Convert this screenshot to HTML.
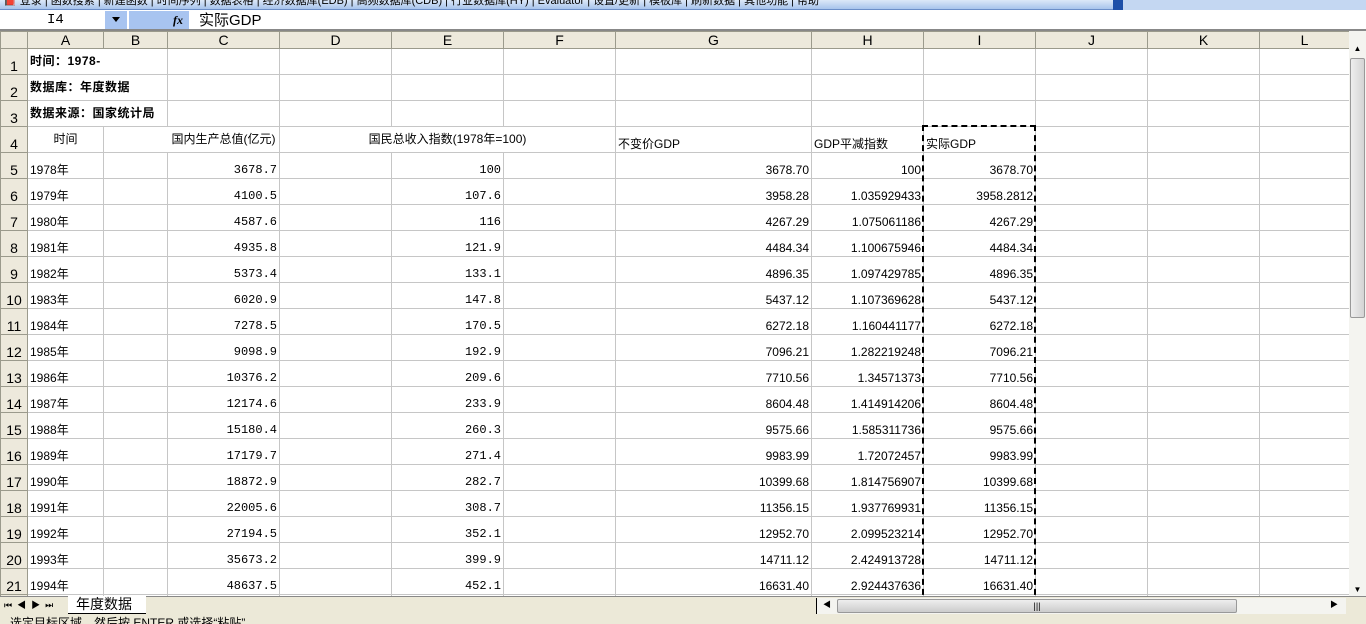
<!DOCTYPE html>
<html><head><meta charset="utf-8"><style>
*{margin:0;padding:0;box-sizing:border-box}
body{width:1366px;height:624px;overflow:hidden;background:#fff;font-family:"Liberation Sans","Noto Sans CJK SC",sans-serif;font-size:12px;position:relative}
#tb{position:absolute;left:0;top:0;width:1366px;height:10px;background:#c4d7f2}
#tb .in{position:absolute;left:0;top:0;width:1118px;height:10px;background:linear-gradient(#dce8f8,#a8c4ec);border-bottom:1px solid #6b8ec8;font-size:11px;line-height:2px;white-space:nowrap;overflow:hidden;color:#000}
#fb{position:absolute;left:0;top:10px;width:1366px;height:21px;background:#fff;border-bottom:2px solid #888}
#nb{position:absolute;left:2px;top:1px;width:125px;height:18px;background:#fff;font-family:"Liberation Mono",monospace;font-size:14px;padding-left:45px;line-height:18px}
#nbd{position:absolute;left:105px;top:1px;width:22px;height:18px;background:#a8c4f0}
#fx{position:absolute;left:129px;top:1px;width:60px;height:18px;background:#a8c4f0;font-style:italic;font-weight:bold;font-family:"Liberation Serif",serif;font-size:12px;text-align:right;padding-right:6px;line-height:18px}
#fv{position:absolute;left:199px;top:1px;font-size:15px;line-height:19px}
table{position:absolute;left:0;top:31px;width:1349px;border-collapse:collapse;table-layout:fixed}
td{border:1px solid #c6c6c6;height:26px;padding:0 2px;white-space:nowrap;vertical-align:bottom;line-height:15px;overflow:visible}
tr.h td{height:17px;background:#ede9dc;border-color:#9b9a8c;text-align:center;font-size:14px;vertical-align:middle}
td.r{background:#ede9dc;border-color:#9b9a8c;text-align:center;font-size:14px;padding:0}
.b{font-weight:bold;font-size:12px;letter-spacing:0.5px}
.m{font-family:"Liberation Mono",monospace;text-align:right;font-size:12px}
.n{text-align:right}
.c{text-align:center;vertical-align:middle}
.nr{border-right-color:#fff}
.nl{border-left-color:#fff}
#sel{position:absolute;left:922px;top:125px;width:114px;height:480px;border:2px dashed #000}
#vs{position:absolute;left:1349px;top:31px;width:17px;height:565px;background:#f4f4f0}
#vs .t{position:absolute;left:1px;top:27px;width:15px;height:260px;background:linear-gradient(90deg,#eee,#d4d4d4);border:1px solid #999;border-radius:2px}
#bar{position:absolute;left:0;top:596px;width:1366px;height:18px;background:#ece9d8;border-top:1px solid #888}
#tab{position:absolute;left:68px;top:-1px;width:78px;height:18px;background:#fff;font-size:14px;line-height:17px;padding-left:8px;border-bottom:1px solid #000}
#hs{position:absolute;left:816px;top:1px;width:530px;height:16px;background:#f4f4f0;border-left:1px solid #000}
#hs .t{position:absolute;left:20px;top:1px;width:400px;height:14px;background:linear-gradient(#eee,#ccc);border:1px solid #999;border-radius:2px;text-align:center;font-size:9px;line-height:12px}
#st{position:absolute;left:0;top:614px;width:1366px;height:10px;background:#ece9d8;font-size:12px;line-height:18px;padding-left:10px;overflow:hidden}
</style></head><body>
<div id="tb"><div class="in">&nbsp;📕 登录 | 函数搜索 | 新建函数 | 时间序列 | 数据表格 | 经济数据库(EDB) | 高频数据库(CDB) | 行业数据库(HY) | Evaluator | 设置/更新 | 模板库 | 刷新数据 | 其他功能 | 帮助</div><div style="position:absolute;left:1113px;top:0;width:10px;height:10px;background:#1d4fa8"></div></div>
<div id="fb"><div id="nb">I4</div><div id="nbd"><span style="position:absolute;left:7px;top:6px;border:4px solid transparent;border-top:5px solid #000"></span></div><div id="fx">fx</div><div id="fv">实际GDP</div></div>
<table>
<colgroup><col style="width:27px"><col style="width:76px"><col style="width:64px"><col style="width:112px"><col style="width:112px"><col style="width:112px"><col style="width:112px"><col style="width:196px"><col style="width:112px"><col style="width:112px"><col style="width:112px"><col style="width:112px"><col style="width:90px"></colgroup>
<tr class="h"><td></td><td>A</td><td>B</td><td>C</td><td>D</td><td>E</td><td>F</td><td>G</td><td>H</td><td>I</td><td>J</td><td>K</td><td>L</td></tr>
<tr><td class="r">1</td><td colspan="2" class="b" style="vertical-align:middle">时间：1978-</td><td></td><td></td><td></td><td></td><td></td><td></td><td></td><td></td><td></td><td></td></tr>
<tr><td class="r">2</td><td colspan="2" class="b" style="vertical-align:middle">数据库：年度数据</td><td></td><td></td><td></td><td></td><td></td><td></td><td></td><td></td><td></td><td></td></tr>
<tr><td class="r">3</td><td colspan="2" class="b" style="vertical-align:middle">数据来源：国家统计局</td><td></td><td></td><td></td><td></td><td></td><td></td><td></td><td></td><td></td><td></td></tr>
<tr><td class="r">4</td><td class="c">时间</td><td class="nr"></td><td class="c nl">国内生产总值(亿元)</td><td colspan="3" class="c">国民总收入指数(1978年=100)</td><td>不变价GDP</td><td>GDP平减指数</td><td>实际GDP</td><td></td><td></td><td></td></tr>
<tr><td class="r">5</td><td>1978年</td><td></td><td class="m">3678.7</td><td></td><td class="m">100</td><td></td><td class="n">3678.70</td><td class="n">100</td><td class="n">3678.70</td><td></td><td></td><td></td></tr>
<tr><td class="r">6</td><td>1979年</td><td></td><td class="m">4100.5</td><td></td><td class="m">107.6</td><td></td><td class="n">3958.28</td><td class="n">1.035929433</td><td class="n">3958.2812</td><td></td><td></td><td></td></tr>
<tr><td class="r">7</td><td>1980年</td><td></td><td class="m">4587.6</td><td></td><td class="m">116</td><td></td><td class="n">4267.29</td><td class="n">1.075061186</td><td class="n">4267.29</td><td></td><td></td><td></td></tr>
<tr><td class="r">8</td><td>1981年</td><td></td><td class="m">4935.8</td><td></td><td class="m">121.9</td><td></td><td class="n">4484.34</td><td class="n">1.100675946</td><td class="n">4484.34</td><td></td><td></td><td></td></tr>
<tr><td class="r">9</td><td>1982年</td><td></td><td class="m">5373.4</td><td></td><td class="m">133.1</td><td></td><td class="n">4896.35</td><td class="n">1.097429785</td><td class="n">4896.35</td><td></td><td></td><td></td></tr>
<tr><td class="r">10</td><td>1983年</td><td></td><td class="m">6020.9</td><td></td><td class="m">147.8</td><td></td><td class="n">5437.12</td><td class="n">1.107369628</td><td class="n">5437.12</td><td></td><td></td><td></td></tr>
<tr><td class="r">11</td><td>1984年</td><td></td><td class="m">7278.5</td><td></td><td class="m">170.5</td><td></td><td class="n">6272.18</td><td class="n">1.160441177</td><td class="n">6272.18</td><td></td><td></td><td></td></tr>
<tr><td class="r">12</td><td>1985年</td><td></td><td class="m">9098.9</td><td></td><td class="m">192.9</td><td></td><td class="n">7096.21</td><td class="n">1.282219248</td><td class="n">7096.21</td><td></td><td></td><td></td></tr>
<tr><td class="r">13</td><td>1986年</td><td></td><td class="m">10376.2</td><td></td><td class="m">209.6</td><td></td><td class="n">7710.56</td><td class="n">1.34571373</td><td class="n">7710.56</td><td></td><td></td><td></td></tr>
<tr><td class="r">14</td><td>1987年</td><td></td><td class="m">12174.6</td><td></td><td class="m">233.9</td><td></td><td class="n">8604.48</td><td class="n">1.414914206</td><td class="n">8604.48</td><td></td><td></td><td></td></tr>
<tr><td class="r">15</td><td>1988年</td><td></td><td class="m">15180.4</td><td></td><td class="m">260.3</td><td></td><td class="n">9575.66</td><td class="n">1.585311736</td><td class="n">9575.66</td><td></td><td></td><td></td></tr>
<tr><td class="r">16</td><td>1989年</td><td></td><td class="m">17179.7</td><td></td><td class="m">271.4</td><td></td><td class="n">9983.99</td><td class="n">1.72072457</td><td class="n">9983.99</td><td></td><td></td><td></td></tr>
<tr><td class="r">17</td><td>1990年</td><td></td><td class="m">18872.9</td><td></td><td class="m">282.7</td><td></td><td class="n">10399.68</td><td class="n">1.814756907</td><td class="n">10399.68</td><td></td><td></td><td></td></tr>
<tr><td class="r">18</td><td>1991年</td><td></td><td class="m">22005.6</td><td></td><td class="m">308.7</td><td></td><td class="n">11356.15</td><td class="n">1.937769931</td><td class="n">11356.15</td><td></td><td></td><td></td></tr>
<tr><td class="r">19</td><td>1992年</td><td></td><td class="m">27194.5</td><td></td><td class="m">352.1</td><td></td><td class="n">12952.70</td><td class="n">2.099523214</td><td class="n">12952.70</td><td></td><td></td><td></td></tr>
<tr><td class="r">20</td><td>1993年</td><td></td><td class="m">35673.2</td><td></td><td class="m">399.9</td><td></td><td class="n">14711.12</td><td class="n">2.424913728</td><td class="n">14711.12</td><td></td><td></td><td></td></tr>
<tr><td class="r">21</td><td>1994年</td><td></td><td class="m">48637.5</td><td></td><td class="m">452.1</td><td></td><td class="n">16631.40</td><td class="n">2.924437636</td><td class="n">16631.40</td><td></td><td></td><td></td></tr>
<tr><td class="r">22</td><td>1995年</td><td></td><td class="m">61339.9</td><td></td><td class="m">500.2</td><td></td><td class="n">18400.00</td><td class="n">3.3</td><td class="n">18400.00</td><td></td><td></td><td></td></tr>
</table>
<div id="sel"></div>
<div id="vs"><div style="position:absolute;left:1px;top:10px;width:15px;height:16px;font-size:8px;text-align:center;line-height:16px">▲</div><div class="t"></div><div style="position:absolute;left:1px;bottom:2px;width:15px;font-size:8px;text-align:center">▼</div></div>
<div id="bar"><div style="position:absolute;left:4px;top:1px;font-size:9px;letter-spacing:5px">⏮◀▶⏭</div><div id="tab">年度数据</div><div id="hs"><span style="position:absolute;left:6px;top:1px;font-size:8px">◀</span><div class="t">|||</div><span style="position:absolute;right:8px;top:1px;font-size:8px">▶</span></div></div>
<div id="st">选定目标区域，然后按 ENTER 或选择“粘贴”</div>
</body></html>
